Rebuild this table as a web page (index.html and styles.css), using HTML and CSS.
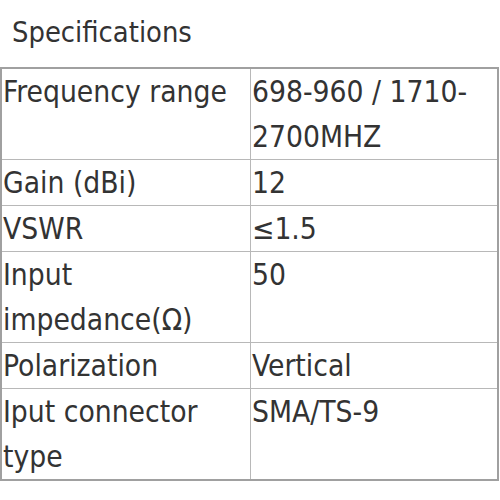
FILE: index.html
```html
<!DOCTYPE html>
<html>
<head>
<meta charset="utf-8">
<link rel="stylesheet" href="styles.css">
</head>
<body>
<div class="page">
  <h2 class="title">Specifications</h2>
  <table class="specs">
    <tr><td class="key">Frequency range</td><td class="val">698-960 / 1710-2700MHZ</td></tr>
    <tr><td class="key">Gain (dBi)</td><td class="val">12</td></tr>
    <tr><td class="key">VSWR</td><td class="val">≤1.5</td></tr>
    <tr><td class="key">Input impedance(Ω)</td><td class="val">50</td></tr>
    <tr><td class="key">Polarization</td><td class="val">Vertical</td></tr>
    <tr><td class="key">Iput connector type</td><td class="val">SMA/TS-9</td></tr>
  </table>
</div>
</body>
</html>
```
FILE: styles.css
```css
html, body {
  margin: 0;
  padding: 0;
  background: #ffffff;
}
.page {
  width: 500px;
  font-family: "DejaVu Sans Condensed", "DejaVu Sans", sans-serif;
  color: #333333;
}
.title {
  margin: 0;
  height: 67px;
  padding: 14px 0 0 12px;
  box-sizing: border-box;
  font-size: 28.8px;
  font-weight: normal;
  line-height: 36px;
}
.specs {
  width: 499px;
  table-layout: fixed;
  border-collapse: collapse;
  border: 2px solid #a0a0a0;
  font-size: 29.7px;
  line-height: 45px;
}
.specs td {
  border: 1px solid #b8b8b8;
  padding: 0 0 0 1px;
  vertical-align: top;
}
.key {
  width: 247px;
}
```
